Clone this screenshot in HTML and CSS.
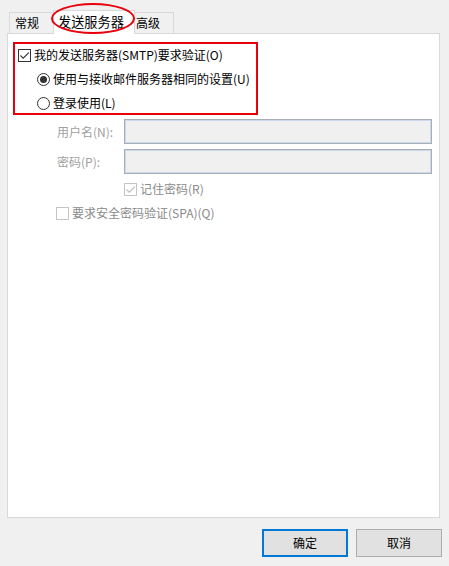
FILE: index.html
```html
<!DOCTYPE html>
<html lang="zh-CN">
<head>
<meta charset="utf-8">
<link rel="stylesheet" href="styles.css">
</head>
<body>
<div class="dialog">
  <div class="tabs">
    <div class="tab">常规</div>
    <div class="tab active">发送服务器</div>
    <div class="tab narrow">高级</div>
  </div>
  <div class="panel">
    <div class="row">
      <span class="box"><svg width="11" height="11" viewBox="0 0 11 11"><path d="M1.5 5.5 L4.2 8.2 L9.8 2.6" fill="none" stroke="#333" stroke-width="1.1"/></svg></span>
      <span class="txt">我的发送服务器(SMTP)要求验证(O)</span>
    </div>
    <div class="row indent">
      <span class="radio on"><span class="dot"></span></span>
      <span class="txt">使用与接收邮件服务器相同的设置(U)</span>
    </div>
    <div class="row indent">
      <span class="radio"></span>
      <span class="txt">登录使用(L)</span>
    </div>
    <div class="field first">
      <span class="flabel">用户名(N):</span>
      <span class="input"></span>
    </div>
    <div class="field">
      <span class="flabel">密码(P):</span>
      <span class="input"></span>
    </div>
    <div class="row remember">
      <span class="box dis"><svg width="11" height="11" viewBox="0 0 11 11"><path d="M1.5 5.5 L4.2 8.2 L9.8 2.6" fill="none" stroke="#bdbdbd" stroke-width="1.1"/></svg></span>
      <span class="txt dtxt">记住密码(R)</span>
    </div>
    <div class="row spa">
      <span class="box dis"></span>
      <span class="txt dtxt">要求安全密码验证(SPA)(Q)</span>
    </div>
  </div>
  <div class="buttons">
    <div class="btn default">确定</div>
    <div class="btn">取消</div>
  </div>
  <div class="mark-rect"></div>
  <div class="mark-ellipse"></div>
</div>
</body>
</html>
```
FILE: styles.css
```css
html, body {
  margin: 0;
  padding: 0;
  background: #f0f0f0;
}
body {
  font-family: "Noto Sans CJK SC", "Noto Sans", sans-serif;
  font-size: 12px;
  color: #000;
}
.dialog {
  position: relative;
  width: 449px;
  height: 566px;
  padding-top: 10px;
  box-sizing: border-box;
}
.tabs {
  display: flex;
  align-items: flex-end;
  height: 23px;
  padding-left: 9px;
  position: relative;
  z-index: 2;
}
.tab {
  box-sizing: border-box;
  width: 46px;
  height: 21px;
  background: #f0f0f0;
  border: 1px solid #d9d9d9;
  border-bottom: none;
  display: flex;
  align-items: center;
  justify-content: flex-start;
  line-height: 14px;
  padding: 0 0 1px 5px;
  white-space: nowrap;
}
.tab.narrow { width: 41px; padding-left: 2px; }
.tab.active {
  width: 82px;
  height: 24px;
  margin: 0 -2px -1px -2px;
  background: #fff;
  position: relative;
  z-index: 3;
  padding: 0 0 2px 4px;
  font-size: 13.2px;
}
.panel {
  position: relative;
  z-index: 1;
  box-sizing: border-box;
  margin-left: 7px;
  width: 433px;
  height: 485px;
  background: #fff;
  border: 1px solid #d9d9d9;
  padding: 9px 7px 0 10px;
  display: flex;
  flex-direction: column;
}
.row {
  display: flex;
  align-items: center;
  height: 24px;
  gap: 3px;
}
.row.indent { padding-left: 19px; }
.txt { line-height: 14px; white-space: nowrap; }
.dtxt { color: #8a8a8a; }
.box {
  box-sizing: border-box;
  width: 13px;
  height: 13px;
  border: 1px solid #333;
  background: #fff;
  display: flex;
  align-items: center;
  justify-content: center;
}
.box.dis { border-color: #c4c4c4; }
.radio {
  box-sizing: border-box;
  width: 13px;
  height: 13px;
  border: 1px solid #333;
  border-radius: 50%;
  background: #fff;
  display: flex;
  align-items: center;
  justify-content: center;
}
.radio .dot {
  width: 7px;
  height: 7px;
  border-radius: 50%;
  background: #333;
}
.field {
  display: flex;
  align-items: center;
  height: 25px;
  margin-top: 5px;
  padding-left: 39px;
}
.field.first { margin-top: 4px; }
.flabel {
  width: 67px;
  color: #a0a0a0;
  line-height: 14px;
  white-space: nowrap;
}
.input {
  flex: 1;
  height: 25px;
  box-sizing: border-box;
  background: #f0f0f0;
  border: 1px solid #a8adb6;
  box-shadow: inset 0 0 0 1px #cad8ec;
}
.row.remember { margin-top: 3px; padding-left: 106px; }
.row.spa { padding-left: 38px; }
.buttons {
  display: flex;
  justify-content: flex-end;
  gap: 8px;
  margin-top: 11px;
  padding-right: 7px;
}
.btn {
  box-sizing: border-box;
  width: 86px;
  height: 28px;
  background: #e1e1e1;
  border: 1px solid #adadad;
  display: flex;
  align-items: center;
  justify-content: center;
  line-height: 14px;
}
.btn.default { border: 2px solid #0078d7; }
.mark-rect {
  position: absolute;
  left: 13px;
  top: 42px;
  width: 245px;
  height: 73px;
  box-sizing: border-box;
  border: 2px solid #e8000b;
  z-index: 5;
}
.mark-ellipse {
  position: absolute;
  left: 51px;
  top: 3px;
  width: 84px;
  height: 31px;
  box-sizing: border-box;
  border: 2px solid #e8000b;
  border-radius: 50%;
  z-index: 5;
}
```
